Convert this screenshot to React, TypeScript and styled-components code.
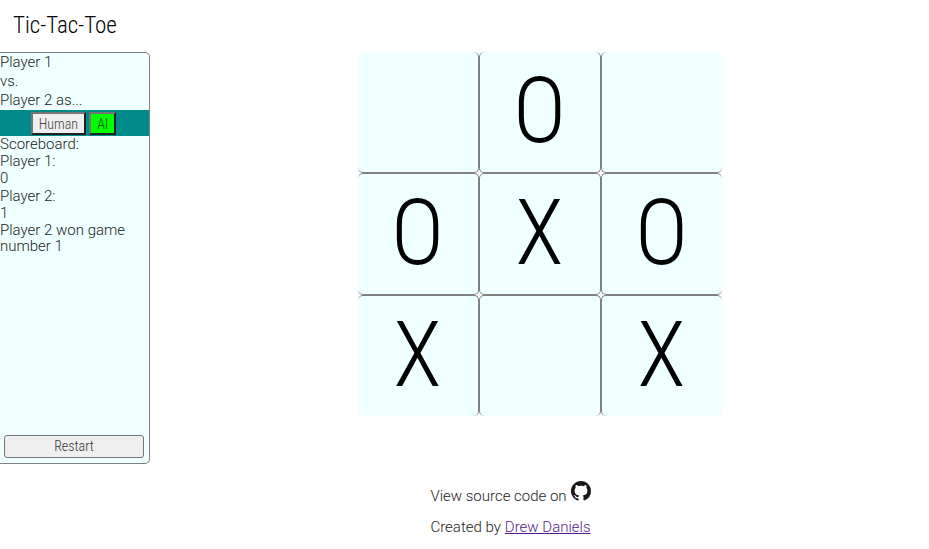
import React from "react";
import styled, { createGlobalStyle } from "styled-components";

type Mark = "X" | "O" | "";

const board: Mark[] = ["", "O", "", "O", "X", "O", "X", "", "X"];

const condensed = `"Roboto Condensed", Roboto, sans-serif`;

const GlobalStyle = createGlobalStyle`
  * { box-sizing: border-box; }
  body {
    margin: 0;
    background: #fff;
    color: #222;
    font-family: Roboto, "Open Sans", sans-serif;
    font-weight: 300;
    font-size: 15px;
    line-height: 16px;
  }
`;

const Page = styled.div`
  display: flex;
  flex-direction: column;
`;

const Title = styled.h1`
  margin: 0;
  padding: 12px 13px;
  font-family: ${condensed};
  font-size: 23px;
  line-height: 28px;
  font-weight: 300;
  color: #000;
`;

const Layout = styled.div`
  display: grid;
  grid-template-columns: 150px 1fr;
  align-items: start;
`;

const Sidebar = styled.aside`
  display: flex;
  flex-direction: column;
  min-height: 412px;
  background: #f0ffff;
  border: 1px solid gray;
  border-left: 0;
  border-radius: 0 5px 5px 0;
`;

const PlayerLine = styled.div`
  line-height: 19px;
`;

const ModeBar = styled.div`
  display: flex;
  justify-content: center;
  gap: 3px;
  height: 26px;
  padding: 2px 2px 1px 0;
  background: darkcyan;
`;

const ModeButton = styled.button<{ $active?: boolean }>`
  padding: 0 6px;
  border: 2px solid;
  border-color: #767676 #212121 #212121 #767676;
  background: ${(p) => (p.$active ? "#00ff00" : "#efefef")};
  color: ${(p) => (p.$active ? "#064006" : "#444")};
  font: inherit;
  font-family: ${condensed};
  font-size: 14px;
  line-height: 16px;
`;

const ScoreHeading = styled.div`
  line-height: 16px;
`;

const Score = styled.dl`
  margin: 0;
  line-height: 17px;
`;

const ScoreTerm = styled.dt`
  line-height: 18px;
`;

const ScoreValue = styled.dd`
  margin: 0;
`;

const Message = styled.p`
  margin: 0;
`;

const Restart = styled.button`
  height: 23px;
  margin: auto 5px 5px 4px;
  padding: 0 6px 2px;
  border: 1px solid #767676;
  border-radius: 3px;
  background: #efefef;
  color: #333;
  font: inherit;
  font-family: ${condensed};
  font-size: 14px;
  line-height: 16px;
`;

const Main = styled.main`
  display: flex;
  flex-direction: column;
  align-items: center;
`;

const Board = styled.div`
  display: grid;
  grid-template-columns: 121px 122px 121px;
  grid-template-rows: 121px 122px 121px;
`;

const Cell = styled.button`
  display: flex;
  align-items: center;
  justify-content: center;
  padding: 0 0 1px;
  border: 1px solid gray;
  border-radius: 5px;
  background: #f0ffff;
  color: #000;
  font: inherit;
  font-family: ${condensed};
  font-size: 90px;
  line-height: 112px;

  &:nth-child(-n + 3) { border-top: 0; }
  &:nth-child(n + 7) { border-bottom: 0; }
  &:nth-child(3n + 1) { border-left: 0; }
  &:nth-child(3n) { border-right: 0; }
`;

const Footer = styled.footer`
  padding: 65px 58px 0 0;
  text-align: center;
`;

const FooterLine = styled.p`
  display: flex;
  justify-content: center;
  align-items: flex-end;
  gap: 4px;
  margin: 0 0 15px;
`;

const IconLink = styled.a`
  display: flex;
  margin-bottom: 3px;
`;

const AuthorLink = styled.a`
  color: #551a8b;
`;

const GitHubIcon = () => (
  <svg width="20" height="20" viewBox="0 0 16 16" fill="#181616" aria-hidden="true">
    <path d="M8 0C3.58 0 0 3.58 0 8c0 3.54 2.29 6.53 5.47 7.59.4.07.55-.17.55-.38 0-.19-.01-.82-.01-1.49-2.01.37-2.53-.49-2.69-.94-.09-.23-.48-.94-.82-1.13-.28-.15-.68-.52-.01-.53.63-.01 1.08.58 1.23.82.72 1.21 1.87.87 2.33.66.07-.52.28-.87.51-1.07-1.78-.2-3.64-.89-3.64-3.95 0-.87.31-1.59.82-2.15-.08-.2-.36-1.02.08-2.12 0 0 .67-.21 2.2.82.64-.18 1.32-.27 2-.27s1.36.09 2 .27c1.53-1.04 2.2-.82 2.2-.82.44 1.1.16 1.92.08 2.12.51.56.82 1.27.82 2.15 0 3.07-1.87 3.75-3.65 3.95.29.25.54.73.54 1.48 0 1.07-.01 1.93-.01 2.2 0 .21.15.46.55.38A8.01 8.01 0 0 0 16 8c0-4.42-3.58-8-8-8z" />
  </svg>
);

export default function App() {
  return (
    <Page>
      <GlobalStyle />
      <Title>Tic-Tac-Toe</Title>
      <Layout>
        <Sidebar>
          <PlayerLine>Player 1</PlayerLine>
          <PlayerLine>vs.</PlayerLine>
          <PlayerLine>Player 2 as...</PlayerLine>
          <ModeBar>
            <ModeButton type="button">Human</ModeButton>
            <ModeButton type="button" $active>AI</ModeButton>
          </ModeBar>
          <ScoreHeading>Scoreboard:</ScoreHeading>
          <Score>
            <ScoreTerm>Player 1:</ScoreTerm>
            <ScoreValue>0</ScoreValue>
          </Score>
          <Score>
            <ScoreTerm>Player 2:</ScoreTerm>
            <ScoreValue>1</ScoreValue>
          </Score>
          <Message>Player 2 won game number 1</Message>
          <Restart type="button">Restart</Restart>
        </Sidebar>
        <Main>
          <Board>
            {board.map((mark, i) => (
              <Cell key={i} type="button" aria-label={`Square ${i + 1} ${mark}`}>
                {mark}
              </Cell>
            ))}
          </Board>
          <Footer>
            <FooterLine>
              View source code on
              <IconLink href="#" aria-label="GitHub">
                <GitHubIcon />
              </IconLink>
            </FooterLine>
            <FooterLine>
              Created by <AuthorLink href="#">Drew Daniels</AuthorLink>
            </FooterLine>
          </Footer>
        </Main>
      </Layout>
    </Page>
  );
}
